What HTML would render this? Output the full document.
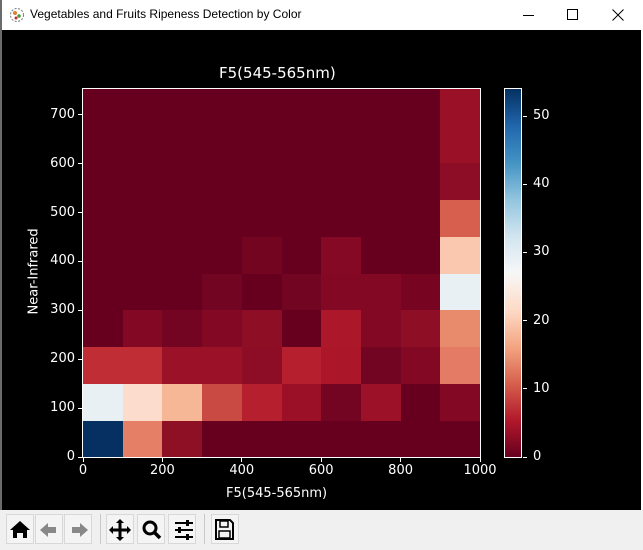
<!DOCTYPE html>
<html><head><meta charset="utf-8"><style>
*{margin:0;padding:0;box-sizing:border-box}
body{width:643px;height:550px;overflow:hidden;background:#fff;font-family:"DejaVu Sans","Liberation Sans",sans-serif;position:relative}
.a{position:absolute}
#plot{left:2px;top:30px;width:639px;height:480px;background:#000}
.t{position:absolute;color:#fff;font-size:13px;line-height:15px;white-space:nowrap}
.tk{position:absolute;background:#fff}
#tb{left:0;top:510px;width:643px;height:40px;background:#f0f0f0}
.btn{position:absolute;top:514px;width:28px;height:30px;border:1px solid #d8d8d8;background:#f4f4f4}
</style></head><body>
<div class="a" style="left:0;top:0;width:643px;height:30px;background:#fff"></div>
<div class="a" style="left:0;top:0;width:2px;height:550px;background:#6b6b6b"></div>
<svg class="a" style="left:9px;top:7px" width="16" height="16" viewBox="0 0 16 16"><circle cx="8" cy="8" r="6.5" fill="none" stroke="#777" stroke-dasharray="2 1.5"/><circle cx="6" cy="6" r="2" fill="#e08030"/><circle cx="10" cy="9" r="1.8" fill="#4a9a40"/><circle cx="7" cy="11" r="1.5" fill="#c03030"/></svg>
<div class="a" style="left:30px;top:7px;font-family:'Liberation Sans',sans-serif;font-size:12px;color:#000">Vegetables and Fruits Ripeness Detection by Color</div>
<div class="a" style="left:523px;top:15px;width:11px;height:1px;background:#000"></div>
<div class="a" style="left:567px;top:9px;width:11px;height:11px;border:1px solid #000"></div>
<svg class="a" style="left:612px;top:9px" width="12" height="12"><path d="M0.5 0.5L11.5 11.5M11.5 0.5L0.5 11.5" stroke="#000" stroke-width="1"/></svg>
<div id="plot" class="a"></div>
<div id="hm" class="a" style="left:83px;top:89px;width:397px;height:368px"></div>
<div class="a" style="left:82px;top:88px;width:399px;height:370px;border:1px solid #fff"></div>
<div class="a" style="left:504px;top:88px;width:18px;height:370px;border:1px solid #fff;background:linear-gradient(to top,#67001f 0%,#b2182b 10%,#d6604d 20%,#f4a582 30%,#fddbc7 40%,#f7f7f7 50%,#d1e5f0 60%,#92c5de 70%,#4393c3 80%,#2166ac 90%,#053061 100%)"></div>
<div class="t" style="left:219px;top:64px;font-size:15px;line-height:18px">F5(545-565nm)</div>
<div class="t" style="left:226px;top:486px">F5(545-565nm)</div>
<div class="t" style="left:-8px;top:265px;transform:rotate(-90deg);width:84px;text-align:center">Near-Infrared</div>
<div id="ax"></div>
<div id="tb" class="a"></div>
<div class="btn" style="left:6px"></div><div class="btn" style="left:35px"></div><div class="btn" style="left:64px"></div>
<div class="a" style="left:100px;top:514px;width:1px;height:30px;background:#c8c8c8"></div>
<div class="btn" style="left:106px"></div><div class="btn" style="left:137px"></div><div class="btn" style="left:168px"></div>
<div class="a" style="left:204px;top:514px;width:1px;height:30px;background:#c8c8c8"></div>
<div class="btn" style="left:211px"></div>
<svg class="a" style="left:0;top:505px" width="260" height="45">
<path d="M10 25L20 16L30 25L27 25L27 33L23 33L23 28L17 28L17 33L13 33L13 25Z" fill="#000"/>
<path d="M40 25L48 18L48 22L56 22L56 28L48 28L48 32Z" fill="#888"/>
<path d="M88 25L80 18L80 22L72 22L72 28L80 28L80 32Z" fill="#888"/>
<path d="M120 14L124 18L121.5 18L121.5 23.5L127 23.5L127 21L131 25L127 29L127 26.5L121.5 26.5L121.5 32L124 32L120 36L116 32L118.5 32L118.5 26.5L113 26.5L113 29L109 25L113 21L113 23.5L118.5 23.5L118.5 18L116 18Z" fill="#000"/>
<circle cx="150" cy="23" r="6" fill="none" stroke="#000" stroke-width="3"/><path d="M154 27L160 33" stroke="#000" stroke-width="3.5"/>
<path d="M175 18H193M175 25H193M175 32H193" stroke="#000" stroke-width="2"/><rect x="186" y="15" width="3" height="6" fill="#000"/><rect x="178" y="22" width="3" height="6" fill="#000"/><rect x="186" y="29" width="3" height="6" fill="#000"/>
<path d="M216 15H230L233 18V34H216Z" fill="none" stroke="#000" stroke-width="2"/><rect x="220" y="16" width="8" height="6" fill="none" stroke="#000" stroke-width="1.5"/><rect x="219" y="26" width="11" height="7" fill="none" stroke="#000" stroke-width="1.5"/>
</svg>
<script>
var D="#67001f";
var rows=[
["#053061","#e57f66","#8e1024",D,D,D,D,D,D,D],
["#e8f0f4","#fcdccc","#f6b797","#c94a42","#b61f2e","#9b1027","#730522","#9c1127",D,"#820823"],
["#c02d35","#c02d35","#9b1127","#9b1127","#8c0d25","#b61f2e","#ac1629","#720521","#820823","#e47b64"],
[D,"#820823","#740522","#820823","#8d0e25",D,"#ac1829","#820823","#8e0e25","#e88a6c"],
[D,D,D,"#720521",D,"#720521","#820823","#820823","#770522","#e8f0f4"],
[D,D,D,D,"#730521",D,"#850924",D,D,"#f9c8ae"],
[D,D,D,D,D,D,D,D,D,"#d6604d"],
[D,D,D,D,D,D,D,D,D,"#8c0d25"],
[D,D,D,D,D,D,D,D,D,"#9a1127"],
[D,D,D,D,D,D,D,D,D,"#9a1127"]];
var h="",W=39.7,H=36.8;
for(var r=0;r<10;r++)for(var c=0;c<10;c++){
h+='<div class="a" style="left:'+(c*W)+'px;top:'+(368-(r+1)*H)+'px;width:'+(W+0.6)+'px;height:'+(H+0.6)+'px;background:'+rows[r][c]+'"></div>';}
document.getElementById("hm").innerHTML=h;
var a="";
var xs=["0","200","400","600","800","1000"];
for(var i=0;i<6;i++){var x=83+i*79.4;a+='<div class="tk" style="left:'+(x-0.5)+'px;top:458px;width:1px;height:4px"></div><div class="t" style="left:'+(x-30)+'px;top:463px;width:60px;text-align:center">'+xs[i]+'</div>';}
for(var i=0;i<8;i++){var y=457-i*48.9;a+='<div class="tk" style="left:78px;top:'+(y-0.5)+'px;width:4px;height:1px"></div><div class="t" style="left:20px;top:'+(y-8)+'px;width:55px;text-align:right">'+(i*100)+'</div>';}
var cb=["0","10","20","30","40","50"];
for(var i=0;i<6;i++){var y=457-i*68.2;a+='<div class="tk" style="left:523px;top:'+(y-0.5)+'px;width:4px;height:1px"></div><div class="t" style="left:533px;top:'+(y-8)+'px">'+cb[i]+'</div>';}
document.getElementById("ax").innerHTML=a;
</script>
</body></html>
